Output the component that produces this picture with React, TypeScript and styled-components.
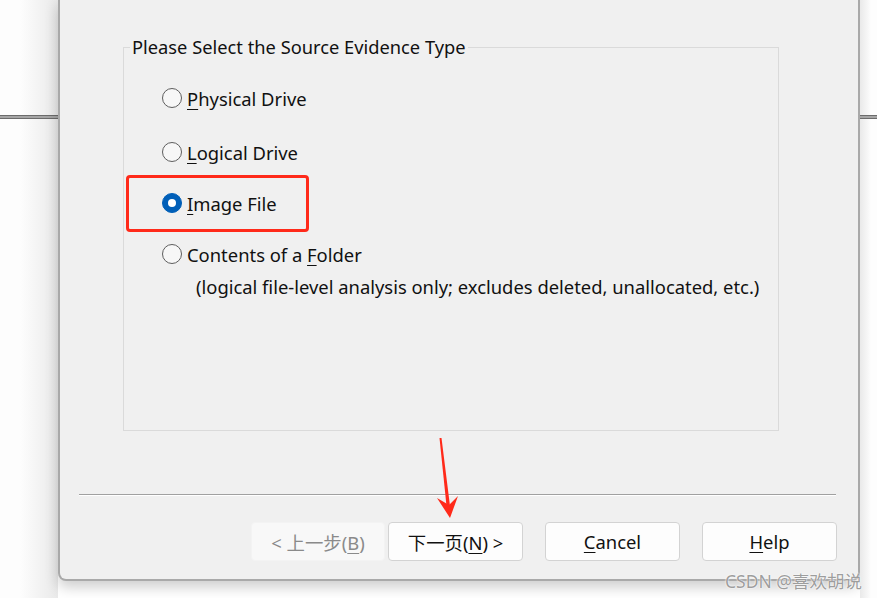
import styled, { createGlobalStyle } from "styled-components";

const GlobalStyle = createGlobalStyle`
    html, body {
        margin: 0;
        padding: 0;
        background: #ffffff;
    }
    body {
        width: 877px;
        height: 598px;
        overflow: hidden;
        font-family: "Noto Sans", "Noto Sans CJK SC", sans-serif;
        color: #111;
    }
`;

const Page = styled.div`
    position: relative;
    display: flex;
    width: 877px;
    height: 598px;
    background: #fff;
`;

const Side = styled.div<{ $side: "left" | "right" }>`
    flex: none;
    width: ${(p) => (p.$side === "left" ? 58 : 17)}px;
    padding-top: 115px;
    box-sizing: border-box;
    background: linear-gradient(
        to ${(p) => (p.$side === "left" ? "right" : "left")},
        #fdfdfd 35%,
        #e9e9e9 100%
    );
`;

const Rail = styled.div`
    height: 4px;
    box-sizing: border-box;
    border-top: 1px solid #6c6c6c;
    border-bottom: 1px solid #6c6c6c;
    background: #a6a6a6;
`;

const Dialog = styled.div`
    flex: none;
    width: 802px;
    height: 581px;
    box-sizing: border-box;
    display: flex;
    flex-direction: column;
    padding-top: 36px;
    background: #f0f0f0;
    border: 2px solid #a9a9a9;
    border-top: none;
    border-radius: 0 0 8px 8px;
    box-shadow: 0 6px 14px rgba(0, 0, 0, 0.2);
`;

const Group = styled.fieldset`
    margin: 0 79px 0 63px;
    padding: 0;
    height: 395px;
    box-sizing: border-box;
    border: 1px solid #dadada;
    min-width: 0;
`;

const Legend = styled.legend`
    margin-left: 6px;
    padding: 0 2px;
    font-size: 18.3px;
    line-height: 22px;
    color: #111;
`;

const OptionList = styled.div`
    display: flex;
    flex-direction: column;
    padding: 28px 0 0 38px;
`;

const Option = styled.div<{ $space: number }>`
    position: relative;
    display: flex;
    align-items: center;
    gap: 5px;
    height: 24px;
    margin-bottom: ${(p) => p.$space}px;
    font-size: 18.4px;
    color: #111;
`;

const Radio = styled.span<{ $checked?: boolean }>`
    position: relative;
    flex: none;
    width: 20px;
    height: 20px;
    box-sizing: border-box;
    border-radius: 50%;
    border: 1px solid ${(p) => (p.$checked ? "#005fb8" : "#5e5e5e")};
    background: ${(p) => (p.$checked ? "#005fb8" : "#f7f7f7")};

    &::after {
        content: "";
        display: ${(p) => (p.$checked ? "block" : "none")};
        position: absolute;
        left: 5px;
        top: 5px;
        width: 8px;
        height: 8px;
        border-radius: 50%;
        background: #fff;
    }
`;

const Key = styled.u`
    text-decoration-thickness: 1px;
    text-underline-offset: 3px;
`;

const Highlight = styled.span`
    position: absolute;
    left: -36px;
    top: -16px;
    width: 183px;
    height: 57px;
    box-sizing: border-box;
    border: 3px solid #ff2a1a;
    border-radius: 4px;
`;

const Note = styled.div`
    padding-left: 34px;
    height: 24px;
    line-height: 24px;
    font-size: 18.4px;
    color: #111;
`;

const Separator = styled.div`
    margin: 63px 22px 0 19px;
    height: 2px;
    box-sizing: border-box;
    border-top: 1px solid #a0a0a0;
    border-bottom: 1px solid #ffffff;
`;

const ButtonRow = styled.div`
    display: flex;
    justify-content: flex-end;
    gap: 22px;
    margin-top: 26px;
    padding-right: 21px;
`;

const NavGroup = styled.div`
    display: flex;
    gap: 3px;
`;

const Button = styled.button<{ $width?: number }>`
    width: ${(p) => p.$width ?? 135}px;
    height: 39px;
    padding: 0;
    box-sizing: border-box;
    border: 1px solid #d3d3d3;
    border-radius: 4px;
    background: #fdfdfd;
    font-family: "Noto Sans", "Noto Sans CJK SC", sans-serif;
    font-size: 18.4px;
    color: #111;

    &:disabled {
        background: #f8f8f8;
        border-color: #f3f3f3;
        color: #8a8a8a;
    }
`;

const Arrow = styled.svg`
    position: absolute;
    left: 430px;
    top: 430px;
    width: 40px;
    height: 95px;
    pointer-events: none;
`;

const Watermark = styled.div`
    position: absolute;
    right: 15px;
    bottom: 5px;
    font-family: "Noto Sans", "Noto Sans CJK SC", sans-serif;
    font-size: 17.5px;
    color: rgba(125, 125, 125, 0.75);
    text-shadow: 0 0 2px #fff, 0 0 1px #fff;
`;

export default function App() {
    return (
        <>
            <GlobalStyle />
            <Page>
                <Side $side="left">
                    <Rail />
                </Side>
                <Dialog>
                    <Group>
                        <Legend>Please Select the Source Evidence Type</Legend>
                        <OptionList>
                            <Option $space={30}>
                                <Radio />
                                <span><Key>P</Key>hysical Drive</span>
                            </Option>
                            <Option $space={27}>
                                <Radio />
                                <span><Key>L</Key>ogical Drive</span>
                            </Option>
                            <Option $space={27}>
                                <Highlight />
                                <Radio $checked />
                                <span><Key>I</Key>mage File</span>
                            </Option>
                            <Option $space={9}>
                                <Radio />
                                <span>Contents of a <Key>F</Key>older</span>
                            </Option>
                            <Note>(logical file-level analysis only; excludes deleted, unallocated, etc.)</Note>
                        </OptionList>
                    </Group>
                    <Separator />
                    <ButtonRow>
                        <NavGroup>
                            <Button $width={134} disabled>&lt; 上一步(<Key>B</Key>)</Button>
                            <Button>下一页(<Key>N</Key>) &gt;</Button>
                        </NavGroup>
                        <Button><Key>C</Key>ancel</Button>
                        <Button><Key>H</Key>elp</Button>
                    </ButtonRow>
                </Dialog>
                <Side $side="right">
                    <Rail />
                </Side>
                <Arrow viewBox="0 0 40 95">
                    <polygon points="9.5,8 11.5,8 20,76 16.5,76" fill="#ff2a1a" />
                    <polygon points="7,68 19,75 28,66 20,88" fill="#ff2a1a" />
                </Arrow>
                <Watermark>CSDN @喜欢胡说</Watermark>
            </Page>
        </>
    );
}
